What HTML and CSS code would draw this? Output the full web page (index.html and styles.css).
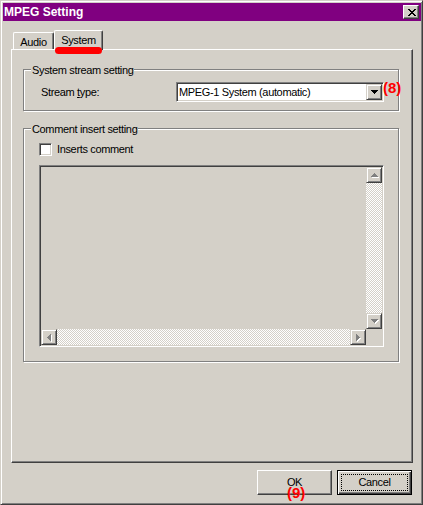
FILE: index.html
```html
<!DOCTYPE html>
<html lang="en">
<head>
    <meta charset="UTF-8">
    <title>MPEG Setting</title>
    <link rel="stylesheet" href="styles.css">
</head>
<body>
    <div class="window">
        <div class="titlebar">
            <span class="title">MPEG Setting</span>
            <span class="close-btn">
                <svg width="8" height="7" viewBox="0 0 8 7" shape-rendering="crispEdges"><path fill="#000" d="M0 0h2v1H0z M6 0h2v1H6z M1 1h2v1H1z M5 1h2v1H5z M2 2h4v1H2z M3 3h2v1H3z M2 4h4v1H2z M1 5h2v1H1z M5 5h2v1H5z M0 6h2v1H0z M6 6h2v1H6z"/></svg>
            </span>
        </div>

        <div class="dialog">
            <div class="tabs">
                <div class="tab">Audio</div>
                <div class="tab active">System<span class="mark"></span></div>
            </div>

            <div class="panel">
                <div class="group">
                    <div class="group-title">System stream setting</div>
                    <div class="field-row">
                        <span class="field-label">Stream <u>t</u>ype:</span>
                        <div class="combo">
                            <span class="combo-value">MPEG-1 System (automatic)</span>
                            <span class="combo-btn">
                                <svg width="7" height="4" viewBox="0 0 7 4" shape-rendering="crispEdges"><path fill="#000" d="M0 0h7v1H0z M1 1h5v1H1z M2 2h3v1H2z M3 3h1v1H3z"/></svg>
                            </span>
                        </div>
                        <span class="callout callout-8">(8)</span>
                    </div>
                </div>

                <div class="group group-comment">
                    <div class="group-title">Comment insert setting</div>
                    <label class="check-row"><span class="checkbox"></span>Inserts comment</label>
                    <div class="memo">
                        <div class="memo-text"></div>
                        <div class="vscroll">
                            <span class="sb-btn">
                                <svg width="8" height="5" viewBox="0 0 8 5" shape-rendering="crispEdges"><path fill="#fff" d="M4 1h1v1H4z M3 2h3v1H3z M2 3h5v1H2z M1 4h7v1H1z"/><path fill="#808080" d="M3 0h1v1H3z M2 1h3v1H2z M1 2h5v1H1z M0 3h7v1H0z"/></svg>
                            </span>
                            <span class="sb-track"></span>
                            <span class="sb-btn">
                                <svg width="8" height="5" viewBox="0 0 8 5" shape-rendering="crispEdges"><path fill="#fff" d="M1 1h7v1H1z M2 2h5v1H2z M3 3h3v1H3z M4 4h1v1H4z"/><path fill="#808080" d="M0 0h7v1H0z M1 1h5v1H1z M2 2h3v1H2z M3 3h1v1H3z"/></svg>
                            </span>
                        </div>
                        <div class="hscroll">
                            <span class="sb-btn">
                                <svg width="5" height="8" viewBox="0 0 5 8" shape-rendering="crispEdges"><path fill="#fff" d="M4 1h1v7H4z M3 2h1v5H3z M2 3h1v3H2z M1 4h1v1H1z"/><path fill="#808080" d="M3 0h1v7H3z M2 1h1v5H2z M1 2h1v3H1z M0 3h1v1H0z"/></svg>
                            </span>
                            <span class="sb-track"></span>
                            <span class="sb-btn">
                                <svg width="5" height="8" viewBox="0 0 5 8" shape-rendering="crispEdges"><path fill="#fff" d="M1 1h1v7H1z M2 2h1v5H2z M3 3h1v3H3z M4 4h1v1H4z"/><path fill="#808080" d="M0 0h1v7H0z M1 1h1v5H1z M2 2h1v3H2z M3 3h1v1H3z"/></svg>
                            </span>
                        </div>
                        <div class="corner"></div>
                    </div>
                </div>
            </div>

            <div class="buttons">
                <button class="btn">OK</button>
                <button class="btn default">Cancel</button>
                <span class="callout callout-9">(9)</span>
            </div>
        </div>
    </div>
</body>
</html>
```

FILE: styles.css
```css
* { box-sizing: border-box; }
body { margin: 0; background: #d4d0c8; color: #000; font: 11px/13px "Liberation Sans", Arial, sans-serif; letter-spacing: -0.35px; }

.window { width: 423px; height: 505px; display: flex; flex-direction: column; background: #d4d0c8; border: 1px solid; border-color: #d4d0c8 #404040 #404040 #d4d0c8; box-shadow: inset 1px 1px #fff, inset -1px -1px #808080; padding: 2px 1px 1px 2px; }

.titlebar { height: 18px; flex: none; display: flex; align-items: center; justify-content: space-between; background: #800080; padding-left: 1px; }
.title { color: #fff; font-weight: bold; font-size: 12px; line-height: 16px; letter-spacing: 0; }
.close-btn { width: 16px; height: 14px; margin-right: 2px; display: flex; align-items: center; justify-content: center; padding-left: 1px; background: #d4d0c8; border: 1px solid; border-color: #fff #404040 #404040 #fff; box-shadow: inset -1px -1px #808080; }

.dialog { flex: 1; display: flex; flex-direction: column; padding: 9px 8px 8px; }

.tabs { height: 19px; flex: none; display: flex; align-items: flex-end; padding-left: 2px; }
.tab { width: 41px; height: 17px; padding-top: 3px; text-align: center; background: #d4d0c8; border: 1px solid; border-bottom: none; border-color: #fff #404040 #404040 #fff; border-radius: 2px 2px 0 0; box-shadow: inset -1px 0 #808080; }
.tab.active { width: 49px; height: 20px; margin-bottom: -1px; position: relative; z-index: 1; }
.mark { position: absolute; left: 0; top: 16px; width: 47px; height: 7px; border-radius: 4px; background: #f00; }

.panel { flex: 1; padding: 19px 13px 0 11px; border: 1px solid; border-color: #fff #404040 #404040 #fff; box-shadow: inset -1px -1px #808080; }

.group { border: 1px solid #808080; box-shadow: inset 1px 1px #fff, 1px 1px #fff; padding-bottom: 8px; }
.group-comment { margin-top: 17px; padding-bottom: 14px; }
.group-title { width: fit-content; margin: -6px 0 0 7px; padding: 0 1px; background: #d4d0c8; }

.field-row { position: relative; display: flex; align-items: center; height: 20px; margin-top: 5px; padding-left: 17px; }
.field-label { width: 135px; }
.combo { width: 208px; height: 20px; display: flex; align-items: center; padding: 1px; background: #fff; border: 1px solid; border-color: #808080 #fff #fff #808080; box-shadow: inset 1px 1px #404040, inset -1px -1px #d4d0c8; }
.combo-value { flex: 1; padding-left: 1px; }
.combo-btn { width: 16px; height: 16px; display: flex; align-items: center; justify-content: center; background: #d4d0c8; border: 1px solid; border-color: #d4d0c8 #404040 #404040 #d4d0c8; box-shadow: inset 1px 1px #fff, inset -1px -1px #808080; }

.callout { position: absolute; color: #f00; font: bold 15px/15px "Liberation Sans", Arial, sans-serif; letter-spacing: 0; }
.callout-8 { left: 359px; top: -2px; }
.callout-9 { left: 276px; top: 15px; }

.check-row { display: flex; align-items: center; height: 13px; margin: 7px 0 0 15px; }
.checkbox { width: 13px; height: 13px; margin-right: 5px; background: #fff; border: 1px solid; border-color: #808080 #fff #fff #808080; box-shadow: inset 1px 1px #404040, inset -1px -1px #d4d0c8; }

.memo { width: 345px; height: 182px; margin: 9px 0 0 15px; padding: 1px; display: grid; grid-template-columns: 1fr 16px; grid-template-rows: 1fr 16px; background: #d4d0c8; border: 1px solid; border-color: #808080 #fff #fff #808080; box-shadow: inset 1px 1px #404040, inset -1px -1px #d4d0c8; }
.vscroll { display: flex; flex-direction: column; }
.hscroll { display: flex; }
.sb-track { flex: 1; background: repeating-conic-gradient(#fff 0 25%, #d4d0c8 0 50%) 0 0 / 2px 2px; }
.sb-btn { width: 16px; height: 16px; flex: none; display: flex; align-items: center; justify-content: center; background: #d4d0c8; border: 1px solid; border-color: #d4d0c8 #404040 #404040 #d4d0c8; box-shadow: inset 1px 1px #fff, inset -1px -1px #808080; }
.sb-btn svg { margin: 1px 0 0 1px; }

.buttons { position: relative; height: 25px; flex: none; margin-top: 7px; display: flex; justify-content: flex-end; gap: 5px; padding-right: 1px; }
.btn { width: 75px; height: 25px; padding: 0; font: inherit; letter-spacing: inherit; color: #000; background: #d4d0c8; border: 1px solid; border-color: #fff #404040 #404040 #fff; box-shadow: inset -1px -1px #808080; }
.btn.default { position: relative; border-color: #000; box-shadow: inset 1px 1px #fff, inset -1px -1px #404040, inset -2px -2px #808080; }
.btn.default::after { content: ""; position: absolute; inset: 3px; border: 1px dotted #000; }
```
